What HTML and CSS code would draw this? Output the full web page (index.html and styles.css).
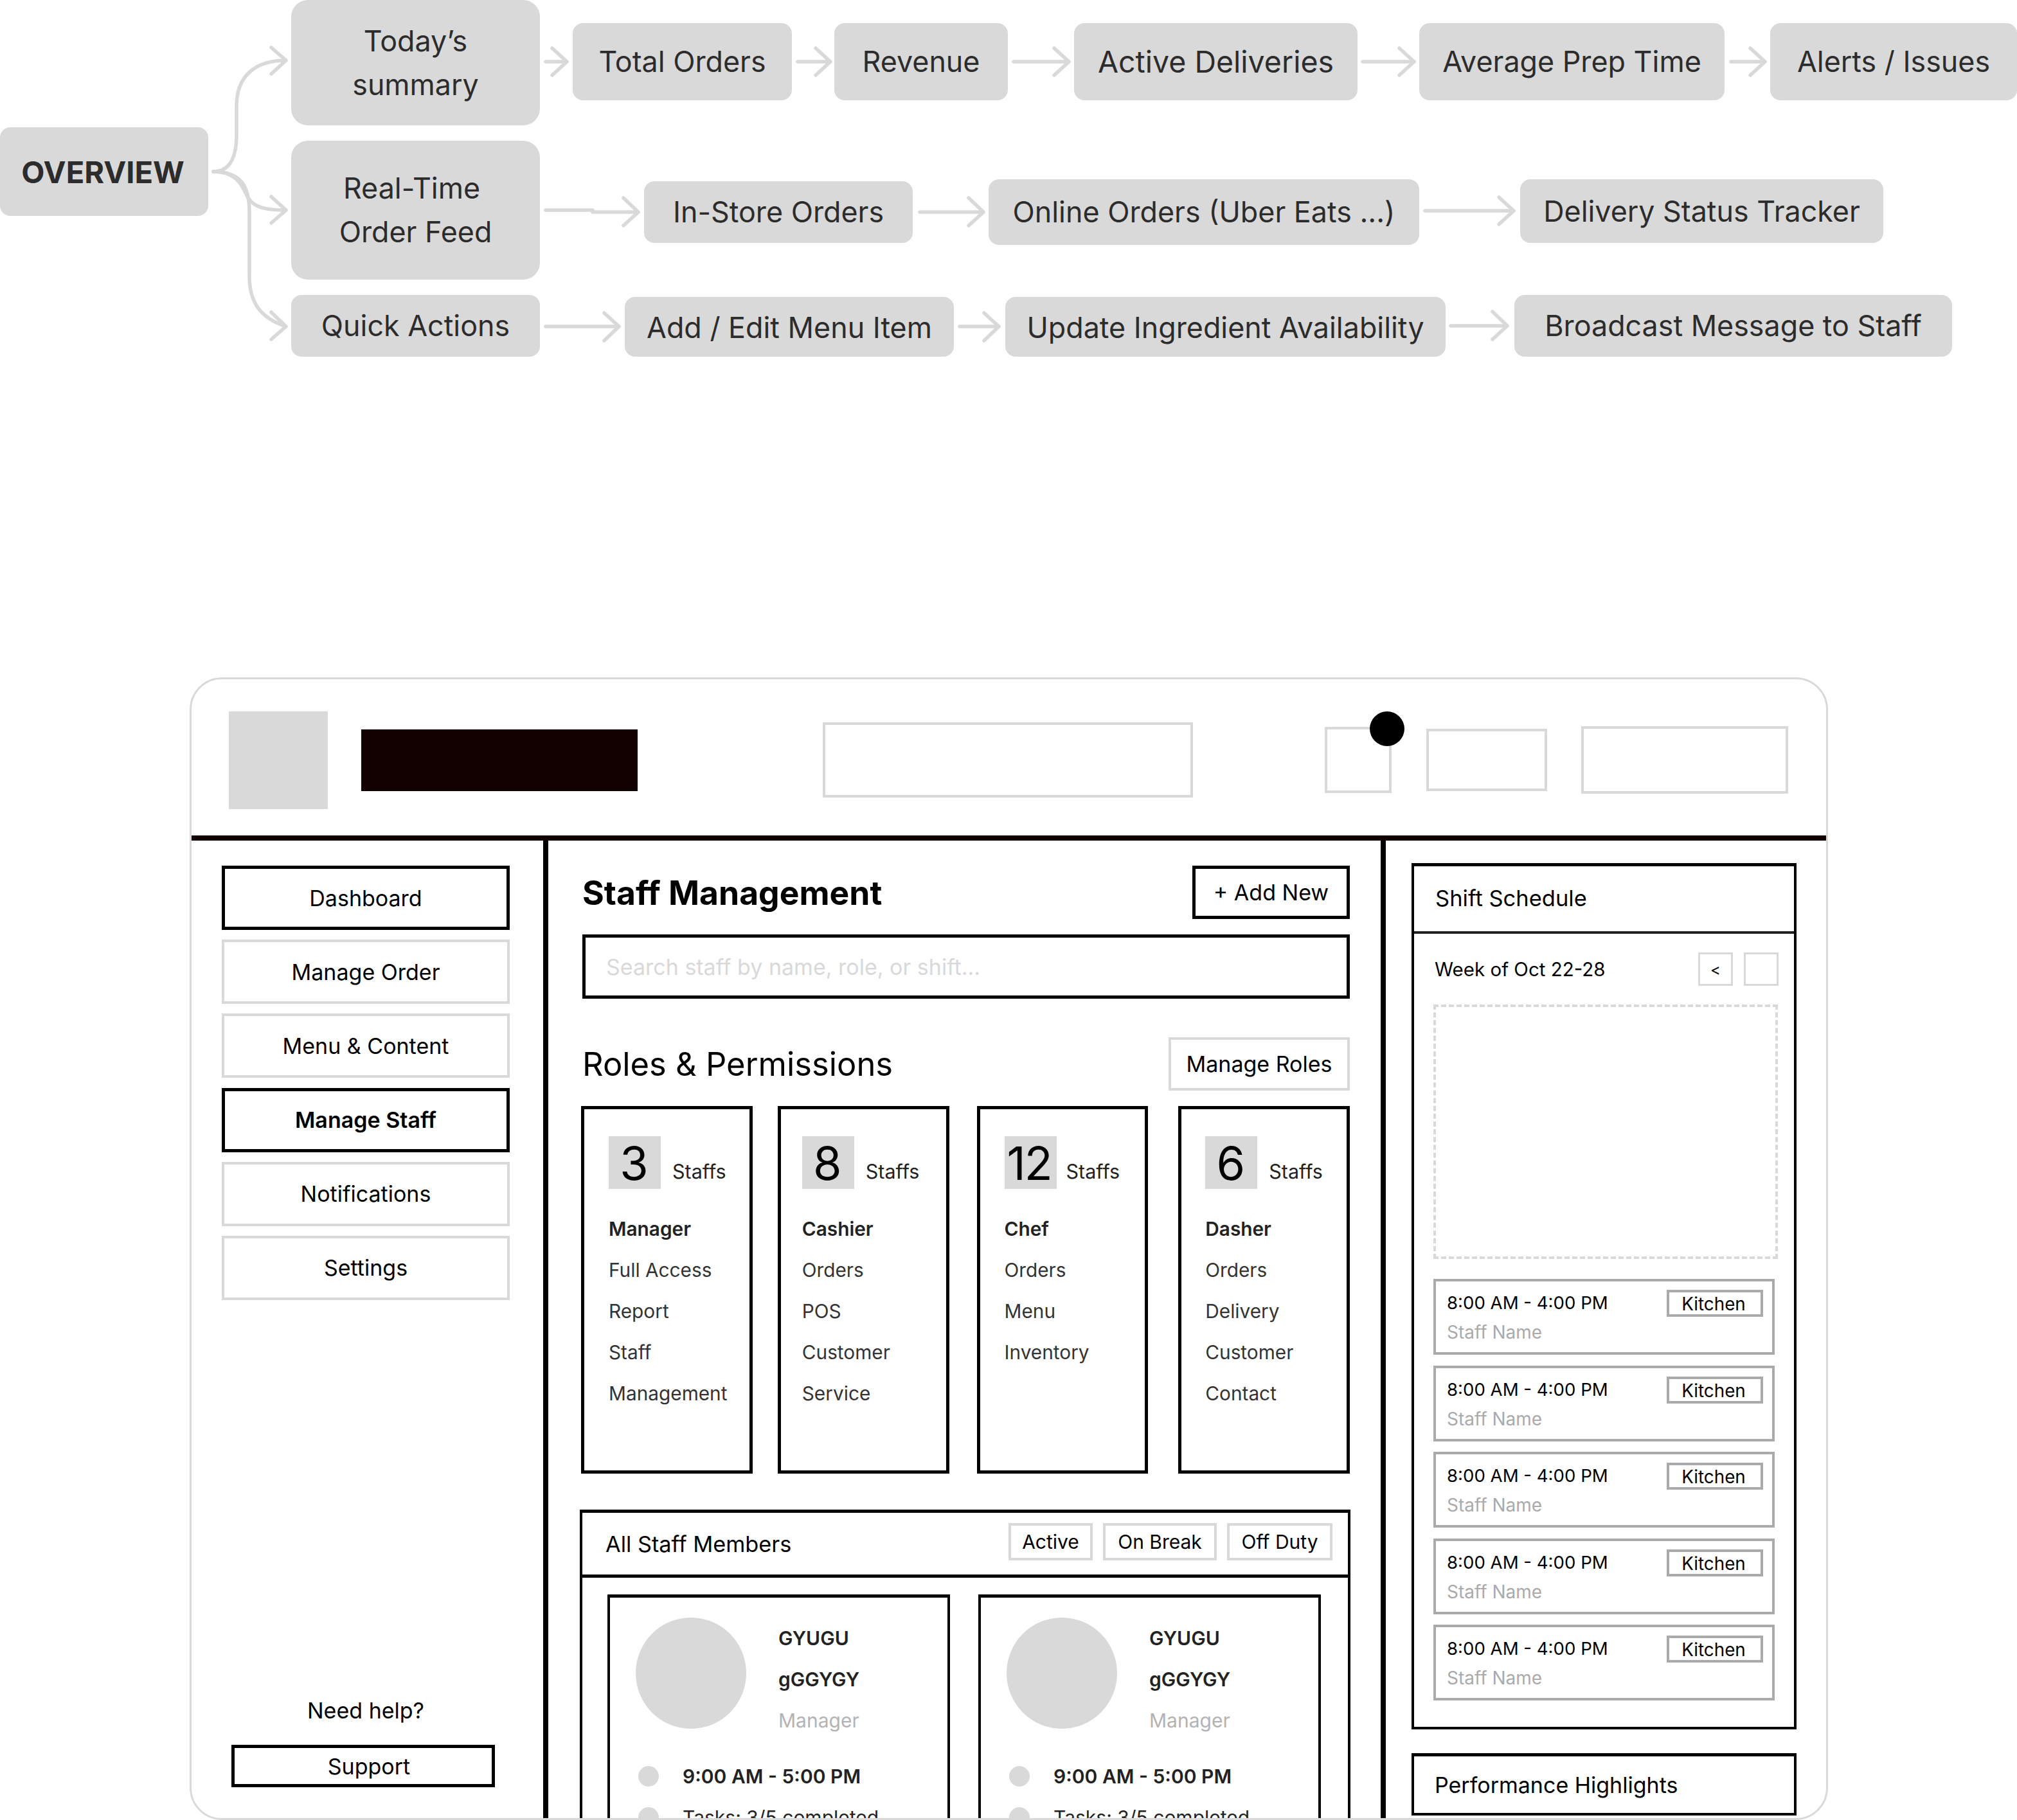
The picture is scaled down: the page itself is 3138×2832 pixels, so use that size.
FILE: index.html
```html
<!DOCTYPE html>
<html lang="en">
<head>
    <meta charset="UTF-8">
    <title>Overview flow and staff management wireframe</title>
    <link rel="stylesheet" href="styles.css">
</head>
<body>
    <section class="flow">
        <svg class="flow-lines" width="3138" height="560" viewBox="0 0 3138 560" fill="none">
            <path d="M332 267C360 267 368 240 368 210L368 165C368 120 395 94 445 94M422 74L445 94L422 115"/>
            <path d="M332 267C365 267 375 285 382 300C390 320 405 327 445 327M422 306L445 327L422 347"/>
            <path d="M332 267C375 267 388 290 388 330L388 430C388 470 405 495 445 508M422 486L445 508L422 528"/>
            <path d="M849 96H882M859 75L882 96L859 117"/>
            <path d="M1241 96H1292M1269 75L1292 96L1269 117"/>
            <path d="M1577 96H1663M1640 75L1663 96L1640 117"/>
            <path d="M2120 96H2200M2177 75L2200 96L2177 117"/>
            <path d="M2693 96H2746M2723 75L2746 96L2723 117"/>
            <path d="M849 327H922V330H993M970 308L993 330L970 351"/>
            <path d="M1431 330H1530M1507 308L1530 330L1507 351"/>
            <path d="M2217 328H2355M2332 307L2355 328L2332 349"/>
            <path d="M849 508H963M940 487L963 508L940 530"/>
            <path d="M1493 508H1554M1531 487L1554 508L1531 530"/>
            <path d="M2257 507H2345M2322 485L2345 507L2322 528"/>
        </svg>
        <div class="node node-overview">OVERVIEW</div>
        <div class="node node-big node-today"><div>Today’s<br>summary</div></div>
        <div class="node node-big node-feed"><div><span class="feed-first">Real-Time</span><br>Order Feed</div></div>
        <div class="node node-quick">Quick Actions</div>
        <div class="node node-total">Total Orders</div>
        <div class="node node-revenue">Revenue</div>
        <div class="node node-active">Active Deliveries</div>
        <div class="node node-prep">Average Prep Time</div>
        <div class="node node-alerts">Alerts / Issues</div>
        <div class="node node-store">In-Store Orders</div>
        <div class="node node-online">Online Orders (Uber Eats ...)</div>
        <div class="node node-tracker">Delivery Status Tracker</div>
        <div class="node node-add">Add / Edit Menu Item</div>
        <div class="node node-update">Update Ingredient Availability</div>
        <div class="node node-broadcast">Broadcast Message to Staff</div>
    </section>

    <div class="screen">
        <header class="topbar">
            <div class="logo"></div>
            <div class="brand"></div>
            <div class="top-search"></div>
            <div class="bell"><span class="bell-dot"></span></div>
            <div class="top-box"></div>
            <div class="top-user"></div>
        </header>

        <div class="layout">
            <nav class="sidebar">
                <a class="nav-item nav-dark">Dashboard</a>
                <a class="nav-item">Manage Order</a>
                <a class="nav-item">Menu &amp; Content</a>
                <a class="nav-item nav-dark nav-current">Manage Staff</a>
                <a class="nav-item">Notifications</a>
                <a class="nav-item">Settings</a>
                <p class="help">Need help?</p>
                <a class="support">Support</a>
            </nav>

            <main class="main">
                <div class="title-row">
                    <h1>Staff Management</h1>
                    <a class="add-new">+ Add New</a>
                </div>
                <div class="search">Search staff by name, role, or shift...</div>

                <div class="roles-row">
                    <h2>Roles &amp; Permissions</h2>
                    <a class="manage-roles">Manage Roles</a>
                </div>

                <div class="roles">
                    <div class="role role-manager">
                        <div class="role-count"><span class="count">3</span><span class="count-label">Staffs</span></div>
                        <ul>
                            <li class="role-name">Manager</li>
                            <li>Full Access</li>
                            <li>Report</li>
                            <li>Staff</li>
                            <li>Management</li>
                        </ul>
                    </div>
                    <div class="role role-cashier">
                        <div class="role-count"><span class="count">8</span><span class="count-label">Staffs</span></div>
                        <ul>
                            <li class="role-name">Cashier</li>
                            <li>Orders</li>
                            <li>POS</li>
                            <li>Customer</li>
                            <li>Service</li>
                        </ul>
                    </div>
                    <div class="role role-chef">
                        <div class="role-count"><span class="count">12</span><span class="count-label">Staffs</span></div>
                        <ul>
                            <li class="role-name">Chef</li>
                            <li>Orders</li>
                            <li>Menu</li>
                            <li>Inventory</li>
                        </ul>
                    </div>
                    <div class="role role-dasher">
                        <div class="role-count"><span class="count">6</span><span class="count-label">Staffs</span></div>
                        <ul>
                            <li class="role-name">Dasher</li>
                            <li>Orders</li>
                            <li>Delivery</li>
                            <li>Customer</li>
                            <li>Contact</li>
                        </ul>
                    </div>
                </div>

                <section class="members">
                    <div class="members-head">
                        <span>All Staff Members</span>
                        <div class="filters">
                            <a class="filter filter-active">Active</a>
                            <a class="filter filter-break">On Break</a>
                            <a class="filter filter-off">Off Duty</a>
                        </div>
                    </div>
                    <div class="member-grid">
                        <div class="member">
                            <div class="member-top">
                                <div class="avatar"></div>
                                <div class="member-info">
                                    <div class="member-name">GYUGU</div>
                                    <div class="member-name">gGGYGY</div>
                                    <div class="member-role">Manager</div>
                                </div>
                            </div>
                            <div class="member-line member-hours"><span class="dot"></span>9:00 AM - 5:00 PM</div>
                            <div class="member-line"><span class="dot"></span>Tasks: 3/5 completed</div>
                        </div>
                        <div class="member">
                            <div class="member-top">
                                <div class="avatar"></div>
                                <div class="member-info">
                                    <div class="member-name">GYUGU</div>
                                    <div class="member-name">gGGYGY</div>
                                    <div class="member-role">Manager</div>
                                </div>
                            </div>
                            <div class="member-line member-hours"><span class="dot"></span>9:00 AM - 5:00 PM</div>
                            <div class="member-line"><span class="dot"></span>Tasks: 3/5 completed</div>
                        </div>
                    </div>
                </section>
            </main>

            <aside class="aside">
                <section class="schedule">
                    <div class="schedule-head">Shift Schedule</div>
                    <div class="week-row">
                        <span>Week of Oct 22-28</span>
                        <div class="week-buttons">
                            <a class="week-btn">&lt;</a>
                            <a class="week-btn"></a>
                        </div>
                    </div>
                    <div class="calendar"></div>
                    <div class="shifts">
                        <div class="shift">
                            <div><div class="shift-time">8:00 AM - 4:00 PM</div><div class="shift-name">Staff Name</div></div>
                            <span class="shift-tag">Kitchen</span>
                        </div>
                        <div class="shift">
                            <div><div class="shift-time">8:00 AM - 4:00 PM</div><div class="shift-name">Staff Name</div></div>
                            <span class="shift-tag">Kitchen</span>
                        </div>
                        <div class="shift">
                            <div><div class="shift-time">8:00 AM - 4:00 PM</div><div class="shift-name">Staff Name</div></div>
                            <span class="shift-tag">Kitchen</span>
                        </div>
                        <div class="shift">
                            <div><div class="shift-time">8:00 AM - 4:00 PM</div><div class="shift-name">Staff Name</div></div>
                            <span class="shift-tag">Kitchen</span>
                        </div>
                        <div class="shift">
                            <div><div class="shift-time">8:00 AM - 4:00 PM</div><div class="shift-name">Staff Name</div></div>
                            <span class="shift-tag">Kitchen</span>
                        </div>
                    </div>
                </section>
                <section class="highlights">Performance Highlights</section>
            </aside>
        </div>
    </div>
</body>
</html>
```

FILE: styles.css
```css
* {
    box-sizing: border-box;
}
html, body {
    height: 2832px;
    overflow: hidden;
}
body {
    margin: 0;
    background: #fff;
    color: #000;
    font-family: Inter, "Liberation Sans", sans-serif;
    font-size: 30px;
}
h1, h2, p, ul {
    margin: 0;
    padding: 0;
    font-size: inherit;
}
ul {
    list-style: none;
}

/* flow diagram: nodes sit on a free canvas */
.flow {
    position: relative;
    height: 1054px;
}
.flow-lines {
    position: absolute;
    left: 0;
    top: 0;
}
.flow-lines path {
    stroke: #d9d9d9;
    stroke-width: 5.5;
    stroke-linecap: round;
    stroke-linejoin: round;
}
.node {
    position: absolute;
    display: flex;
    align-items: center;
    justify-content: center;
    text-align: center;
    background: #d9d9d9;
    border-radius: 16px;
    color: #2c2c2c;
    font-size: 44.8px;
    white-space: nowrap;
}
.node-big {
    border-radius: 26px;
    line-height: 68px;
}
.feed-first {
    margin-right: 12px;
}
.node-overview { left: 0; top: 198px; width: 324px; height: 138px; padding-right: 4px; font-weight: 700; font-size: 47px; }
.node-today { left: 453px; top: 0; width: 387px; height: 195px; }
.node-feed { left: 453px; top: 219px; width: 387px; height: 216px; }
.node-quick { left: 453px; top: 459px; width: 387px; height: 96px; }
.node-total { left: 891px; top: 36px; width: 341px; height: 120px; }
.node-revenue { left: 1298px; top: 36px; width: 270px; height: 120px; }
.node-active { left: 1671px; top: 36px; width: 441px; height: 120px; font-size: 46.5px; }
.node-prep { left: 2208px; top: 36px; width: 475px; height: 120px; }
.node-alerts { left: 2754px; top: 36px; width: 384px; height: 120px; }
.node-store { left: 1002px; top: 282px; width: 418px; height: 96px; }
.node-online { left: 1538px; top: 279px; width: 670px; height: 102px; }
.node-tracker { left: 2365px; top: 279px; width: 565px; height: 99px; }
.node-add { left: 972px; top: 462px; width: 512px; height: 93px; padding-top: 2px; }
.node-update { left: 1564px; top: 462px; width: 685px; height: 93px; padding-top: 2px; }
.node-broadcast { left: 2356px; top: 459px; width: 681px; height: 96px; }

/* wireframe */
.screen {
    width: 2549px;
    height: 1778px;
    margin-left: 295px;
    display: flex;
    flex-direction: column;
    overflow: hidden;
    background: #fff;
    border: 3px solid #d9d9d9;
    border-radius: 50px;
}
.topbar {
    flex: none;
    height: 243px;
    display: flex;
    align-items: center;
    padding: 8px 0 0 58px;
}
.logo {
    width: 154px;
    height: 152px;
    background: #d9d9d9;
}
.brand {
    width: 430px;
    height: 96px;
    margin-left: 52px;
    background: #120000;
}
.top-search {
    width: 576px;
    height: 117px;
    margin-left: 288px;
    border: 4px solid #d9d9d9;
}
.bell {
    position: relative;
    width: 104px;
    height: 103px;
    margin-left: 205px;
    border: 4px solid #d9d9d9;
}
.bell-dot {
    position: absolute;
    left: 66px;
    top: -28px;
    width: 54px;
    height: 54px;
    background: #000;
    border-radius: 50%;
}
.top-box {
    width: 188px;
    height: 97px;
    margin-left: 54px;
    border: 4px solid #d9d9d9;
}
.top-user {
    width: 322px;
    height: 105px;
    margin-left: 53px;
    border: 4px solid #d9d9d9;
}
.layout {
    flex: 1;
    min-height: 0;
    display: grid;
    grid-template-columns: 555px 1295px 1fr;
    border-top: 8px solid #120000;
}

/* sidebar */
.sidebar {
    display: flex;
    flex-direction: column;
    gap: 15.2px;
    padding: 39px 0 48px 47px;
    border-right: 8px solid #000;
}
.nav-item {
    flex: none;
    width: 448px;
    height: 100px;
    display: flex;
    align-items: center;
    justify-content: center;
    border: 4px solid #d9d9d9;
    font-size: 34px;
}
.nav-dark {
    border: 5px solid #000;
}
.nav-current {
    font-weight: 600;
}
.help {
    width: 448px;
    margin-top: auto;
    margin-bottom: 16px;
    text-align: center;
    font-size: 34px;
    line-height: 44px;
}
.support {
    width: 410px;
    height: 66px;
    margin-left: 15px;
    padding-left: 18px;
    display: flex;
    align-items: center;
    justify-content: center;
    border: 5px solid #000;
    font-size: 34px;
}

/* main column */
.main {
    padding: 39px 48px 0 53px;
    overflow: hidden;
}
.title-row,
.roles-row {
    display: flex;
    align-items: center;
    justify-content: space-between;
}
h1 {
    font-size: 51.6px;
    font-weight: 700;
}
h2 {
    font-size: 50.7px;
    font-weight: 400;
}
.add-new {
    width: 245px;
    height: 83px;
    display: flex;
    align-items: center;
    justify-content: center;
    border: 5px solid #000;
    font-size: 34px;
}
.search {
    height: 100px;
    margin-top: 24px;
    padding-left: 32px;
    display: flex;
    align-items: center;
    border: 5px solid #000;
    color: #d9d9d9;
    font-size: 34px;
}
.roles-row {
    margin-top: 60px;
}
.manage-roles {
    width: 282px;
    height: 83px;
    display: flex;
    align-items: center;
    justify-content: center;
    border: 4px solid #d9d9d9;
    font-size: 34px;
}
.roles {
    display: flex;
    margin: 24px 0 0 -2px;
}
.role {
    width: 267px;
    height: 572px;
    padding: 42px 0 0 38px;
    border: 5px solid #000;
}
.role-cashier { margin-left: 39px; padding-left: 33px; }
.role-chef { margin-left: 43px; }
.role-dasher { margin-left: 47px; padding-left: 37px; }
.role-count {
    display: flex;
    align-items: flex-end;
}
.count {
    width: 81px;
    height: 82px;
    padding-right: 4px;
    display: flex;
    align-items: center;
    justify-content: center;
    background: #d9d9d9;
    font-size: 72px;
    letter-spacing: -2px;
}
.count-label {
    margin-left: 18px;
    padding-bottom: 8px;
    font-size: 30.5px;
    line-height: 38px;
    color: #222;
}
.role-chef .count-label {
    margin-left: 15px;
}
.role ul {
    margin-top: 30px;
    color: #333;
    font-size: 29.8px;
    line-height: 64px;
}
.role-name {
    font-weight: 600;
    color: #222;
}

/* staff members */
.members {
    width: 1199px;
    margin: 56px 0 0 -4px;
    border: 4px solid #000;
    border-top-width: 5px;
}
.members-head {
    height: 101px;
    display: flex;
    align-items: center;
    justify-content: space-between;
    padding: 0 24px 0 36px;
    border-bottom: 5px solid #000;
    font-size: 34.3px;
}
.filters {
    display: flex;
    gap: 16px;
    margin-bottom: 6px;
}
.filter {
    height: 58px;
    display: flex;
    align-items: center;
    justify-content: center;
    border: 4px solid #d9d9d9;
    font-size: 30px;
}
.filter-active { width: 131px; }
.filter-break { width: 177px; }
.filter-off { width: 164px; }
.member-grid {
    display: grid;
    grid-template-columns: 533px 533px;
    gap: 44px;
    padding: 26px 0 0 39px;
}
.member {
    height: 420px;
    padding: 31px 0 0 40px;
    border: 5px solid #000;
    border-width: 5px 4px 4px;
}
.member-top {
    display: flex;
    gap: 50px;
}
.avatar {
    width: 172px;
    height: 173px;
    background: #d9d9d9;
    border-radius: 50%;
}
.member-info {
    line-height: 64px;
}
.member-name {
    font-weight: 600;
    color: #222;
}
.member-role {
    color: #b3b3b3;
}
.member-line {
    display: flex;
    align-items: center;
    gap: 37px;
    height: 64px;
    margin-left: 4px;
    color: #222;
}
.member-hours {
    margin-top: 23px;
    font-weight: 600;
}
.dot {
    width: 32px;
    height: 32px;
    background: #d9d9d9;
    border-radius: 50%;
}

/* right column */
.aside {
    padding: 35px 0 0 40px;
    border-left: 8px solid #000;
    overflow: hidden;
}
.schedule,
.highlights {
    width: 599px;
    border: 4px solid #000;
    border-top-width: 5px;
}
.schedule {
    height: 1348px;
}
.schedule-head {
    height: 105px;
    padding: 0 0 2px 33px;
    display: flex;
    align-items: center;
    border-bottom: 4px solid #222;
    font-size: 34.5px;
}
.week-row {
    display: flex;
    align-items: center;
    justify-content: space-between;
    margin-top: 29px;
    padding: 0 24px 0 32px;
    font-size: 29.5px;
}
.week-buttons {
    display: flex;
    gap: 17px;
}
.week-btn {
    width: 54px;
    height: 52px;
    display: flex;
    align-items: center;
    justify-content: center;
    border: 3px solid #d9d9d9;
    font-size: 24px;
}
.calendar {
    width: 536px;
    height: 396px;
    margin: 29px 0 0 30px;
    border: 4px dashed #d9d9d9;
}
.shifts {
    display: flex;
    flex-direction: column;
    gap: 16.5px;
    width: 531px;
    margin: 31px 0 0 30px;
}
.shift {
    height: 118px;
    display: flex;
    align-items: flex-start;
    justify-content: space-between;
    padding: 13px 14px 0 17px;
    border: 4px solid #aaa;
}
.shift-time {
    line-height: 40px;
    font-size: 27.6px;
}
.shift-name {
    margin-top: 6px;
    line-height: 40px;
    font-size: 28px;
    color: #aaa;
}
.shift-tag {
    width: 150px;
    height: 42px;
    display: flex;
    align-items: center;
    justify-content: center;
    padding: 2px 4px 0 0;
    border: 4px solid #aaa;
    font-size: 27.8px;
}
.highlights {
    height: 97px;
    margin-top: 37px;
    padding-left: 32px;
    display: flex;
    align-items: center;
    font-size: 34px;
}
```
